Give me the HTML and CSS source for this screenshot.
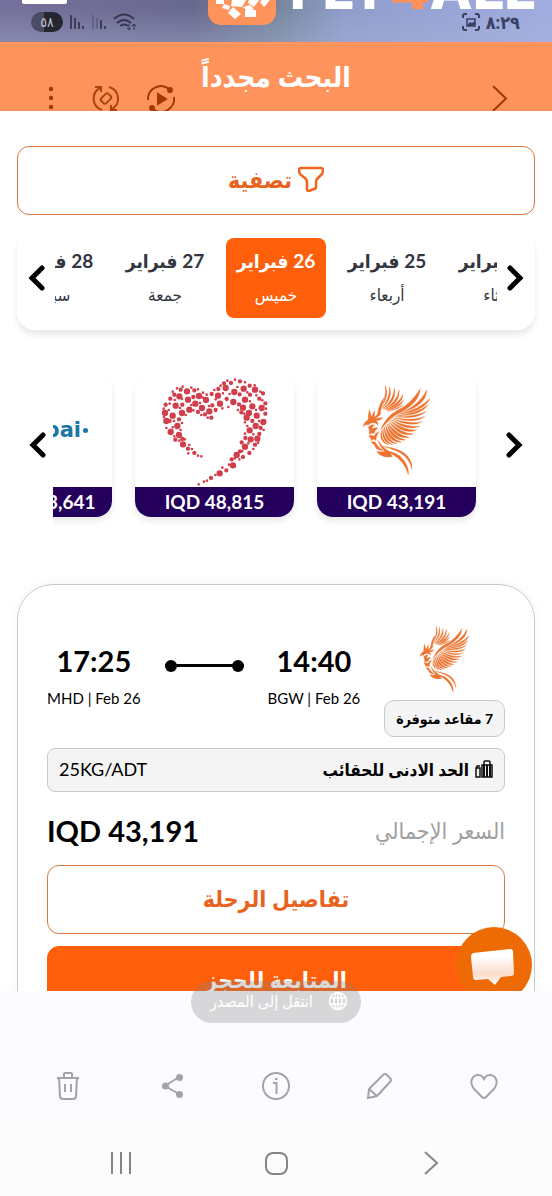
FILE: index.html
```html
<!DOCTYPE html>
<html lang="ar" dir="rtl">
<head>
    <meta charset="UTF-8">
    <meta name="viewport" content="width=device-width, initial-scale=1.0">
    <title>FLY4ALL</title>
    <link rel="stylesheet" href="styles.css">
</head>
<body>
    <svg class="defs" aria-hidden="true">
        <symbol id="phoenix" viewBox="150 80 208 278">
            <!-- back wing -->
            <path d="M205 152Q225 120 220 84Q235 118 205 152zM208 154Q234 125 233 88Q245 125 208 154zM212 155Q245 130 248 92Q256 134 212 155zM215 157Q255 135 262 98Q266 140 215 157zM220 158Q260 140 274 111Q270 146 220 158zM224 159Q258 147 276 128Q266 152 224 159zM226 162Q256 154 275 143Q260 158 226 162zM196 176Q200 140 216 122Q208 146 204 172z"/>
            <!-- front wing -->
            <path d="M206 218Q222 178 256 160Q296 142 326 94Q322 138 264 166Q234 182 206 218z"/>
            <path d="M262 168Q322 146 346 97Q344 148 262 168zM258 172Q326 156 355 124Q338 164 258 172zM254 176Q318 168 350 143Q328 176 254 176zM250 179Q316 178 344 162Q320 188 250 179zM246 182Q306 192 339 178Q310 202 246 182zM242 185Q300 203 332 193Q300 214 242 185zM238 188Q292 213 325 207Q288 226 238 188zM235 191Q282 222 315 219Q276 236 235 191zM231 194Q272 231 305 231Q264 244 231 194zM228 198Q260 238 293 241Q250 250 228 198zM225 201Q248 243 281 249Q238 255 225 201zM221 205Q238 248 269 256Q226 258 221 205zM217 209Q226 250 256 261Q216 258 217 209zM213 213Q215 250 243 264Q206 257 213 213zM209 219Q206 250 230 264Q198 254 209 219z"/>
            <!-- head and crest -->
            <path d="M153 209Q158 192 168 189Q169 172 172 157Q176 170 178 180Q184 166 189 161Q188 174 185 181Q196 170 208 168Q200 180 190 185Q202 182 213 181Q204 191 192 191Q199 194 198 204Q191 196 182 197Q172 198 168 205Q164 198 153 209z"/>
            <!-- breast and body -->
            <path d="M169 210Q178 200 188 204Q180 208 181 217Q187 211 198 213Q188 220 186 230Q178 224 172 235Q174 220 169 210zM170 238Q180 231 185 238Q190 228 202 224Q191 238 192 251Q184 243 178 252Q179 243 170 238zM178 256Q188 249 194 262Q200 274 214 281Q196 279 192 274Q190 264 178 256zM194 283Q208 287 218 283Q201 266 198 250Q210 271 232 284L242 299Q222 304 208 296Q198 291 194 283z"/>
            <!-- tail -->
            <path d="M212 268Q270 275 289 300Q302 318 301 338Q295 314 278 297Q258 280 212 268zM216 280Q258 285 274 308Q292 329 290 355Q282 328 266 311Q250 294 216 280z"/>
        </symbol>
        <symbol id="arrow" viewBox="0 0 18 26">
            <path d="M4 3l10 10L4 23" fill="none" stroke="currentColor" stroke-width="5" stroke-linecap="round"/>
        </symbol>
    </svg>

    <div class="screen">
        <div class="viewport">
            <header class="topbar">
                <span class="menu-bar"></span>
                <div class="brand" dir="ltr">
                    <svg class="brand-mark" width="68" height="68" viewBox="0 0 68 68">
                        <rect width="68" height="68" rx="13" fill="#ff935c"/>
                        <path fill="#fff" d="M8 40h8v7H8zM27 38h14l-7 12-11-1 1-6zM42 38l12 1-8 11-6-4zM54 42l8 1-6 7-4-5zM16 47l6 2-1 4-7-2zM25 50l8 7-6 5-7-6zM35 50l7-2 4 4-6 3zM37 53h11v7H37z"/>
                    </svg>
                    <span class="brand-name">FLY<b>4</b>ALL</span>
                </div>

                <div class="status" dir="ltr">
                    <div class="status-side">
                        <span class="battery">٥٨</span>
                        <svg width="16" height="18" viewBox="0 0 16 18" fill="none" stroke="#3d3d58" stroke-width="2"><path d="M2 2v14M6 5v11M10 9v7M14 13v3"/></svg>
                        <svg width="16" height="18" viewBox="0 0 16 18" fill="none" stroke="#3d3d58" stroke-width="2"><path d="M2 2v14M6 5v11" opacity=".35"/><path d="M10 7v9M14 13v3"/></svg>
                        <svg width="24" height="18" viewBox="0 0 24 18" fill="none" stroke="#35354e" stroke-width="2"><path d="M1 6q10-9 20 0M4 10q7-6 14 0M7 13q4-3 8 0"/><path d="M16 11v6m-2-2l2 2 2-2M21 17v-6m-2 2l2-2 2 2" stroke-width="1"/></svg>
                    </div>
                    <div class="status-side">
                        <svg width="18" height="18" viewBox="0 0 18 18" fill="none" stroke="#3a4162" stroke-width="2"><path d="M1 5V3q0-2 2-2h2M13 1h2q2 0 2 2v2M17 13v2q0 2-2 2h-2M5 17H3q-2 0-2-2v-2"/><path d="M5 6h8v7H5z" stroke-width="1.500"/><path d="M5 12l3-3 2 1 3-2v5H5z" fill="#3a4162" stroke="none"/></svg>
                        <span class="clock">٨:٢٩</span>
                    </div>
                </div>
            </header>

            <div class="again">
                <button class="again-button" type="button">البحث مجدداً</button>
                <div class="viewer-tools" dir="ltr">
                    <button type="button" aria-label="المزيد"><svg width="28" height="28" viewBox="0 0 28 28" fill="#a03a00"><circle cx="14" cy="4" r="2.200"/><circle cx="14" cy="13" r="2.200"/><circle cx="14" cy="22" r="2.200"/></svg></button>
                    <button type="button" aria-label="تدوير"><svg width="28" height="28" viewBox="0 0 28 28" fill="none" stroke="#a8450f" stroke-width="2"><path d="M8 3A12 12 0 0 0 10 25M3 2h6v5M17 2A12 12 0 0 1 20 24M25 25h-6v-5"/><rect x="9" y="10" width="10" height="7" rx="2" transform="rotate(-45 14 13.500)"/></svg></button>
                    <button type="button" aria-label="تشغيل"><svg width="28" height="28" viewBox="0 0 28 28" fill="none" stroke="#a03a00" stroke-width="2"><path d="M1 15A13 13 0 0 1 22 4M27 12A13 13 0 0 1 6 24"/><circle cx="23" cy="5" r="2" fill="#a03a00"/><circle cx="5" cy="23" r="2" fill="#a03a00"/><path d="M11 9v10l8-5z" fill="#a03a00"/></svg></button>
                    <button class="tool-back" type="button" aria-label="رجوع"><svg width="28" height="28" viewBox="0 0 28 28" fill="none" stroke="#a03a00" stroke-width="2"><path d="M7 1l13 12.500L7 26"/></svg></button>
                </div>
            </div>

            <main class="content">
                <button class="outline-button" type="button">
                    <svg width="26" height="26" viewBox="0 0 26 26" fill="none" stroke="#f1641e" stroke-width="2.500" stroke-linejoin="round"><path d="M3 2h20q2 0 2 2v1q0 2-2 4l-4 4q-1 1-1 4v4q0 2-2 2l-5 2q-2 0-2-2v-6q0-3-2-5L3 9Q1 7 1 5V4q0-2 2-2z"/></svg>
                    تصفية
                </button>

                <section class="dates">
                    <button class="arrow" type="button" aria-label="السابق"><svg width="18" height="26"><use href="#arrow"/></svg></button>
                    <div class="dates-window">
                        <button class="date" type="button"><b>24 فبراير</b><span>ثلاثاء</span></button>
                        <button class="date" type="button"><b>25 فبراير</b><span>أربعاء</span></button>
                        <button class="date selected" type="button"><b>26 فبراير</b><span>خميس</span></button>
                        <button class="date" type="button"><b>27 فبراير</b><span>جمعة</span></button>
                        <button class="date" type="button"><b>28 فبراير</b><span>سبت</span></button>
                    </div>
                    <button class="arrow flip" type="button" aria-label="التالي"><svg width="18" height="26"><use href="#arrow"/></svg></button>
                </section>

                <section class="airlines">
                    <button class="arrow" type="button" aria-label="السابق"><svg width="18" height="26"><use href="#arrow"/></svg></button>
                    <div class="airlines-window">
                        <a class="airline" href="#">
                            <span class="airline-logo"><svg class="phoenix" width="69" height="92"><use href="#phoenix"/></svg></span>
                            <span class="airline-price" dir="ltr">IQD 43,191</span>
                        </a>
                        <a class="airline" href="#">
                            <span class="airline-logo">
                                <svg width="158" height="114" viewBox="50 40 474 342" fill="none" stroke="#d23f4c" stroke-linecap="round">
                                    <path stroke-width="19" d="M203 95h0M319 85h0M373 87h0M407 90h0M180 110h0M239 109h0M296 108h0M345 97h0M206 120h0M260 121h0M228 132h0M302 132h0M342 127h0M377 120h0M169 138h0M248 145h0M210 150h0M270 155h0M371 144h0M399 140h0M427 145h0M137 160h0M160 168h0M188 160h0M389 160h0M412 168h0M141 184h0M382 174h0M432 187h0M174 199h0M409 199h0M154 217h0M391 212h0M179 226h0M394 239h0M191 254h0M377 261h0M414 237h0M352 286h0M341 317h0M301 341h0"/>
                                    <path stroke-width="13" d="M225 92h0M335 70h0M362 65h0M391 78h0M153 117h0M139 135h0M165 105h0M184 90h0M277 103h0M297 88h0M314 71h0M361 104h0M392 105h0M420 117h0M431 101h0M438 131h0M189 135h0M222 112h0M279 137h0M322 118h0M359 134h0M438 162h0M179 179h0M151 184h0M257 164h0M289 151h0M276 174h0M236 157h0M366 158h0M399 184h0M424 205h0M168 240h0M420 223h0M378 235h0M407 255h0M206 267h0M225 280h0M390 280h0M367 248h0M371 292h0M337 299h0M321 332h0M275 355h0M189 238h0M362 275h0"/>
                                    <path stroke-width="8" d="M160 96h0M173 86h0M190 81h0M216 84h0M236 89h0M251 99h0M262 105h0M285 91h0M304 78h0M324 63h0M347 60h0M377 68h0M406 77h0M423 96h0M429 122h0M440 147h0M133 147h0M151 132h0M166 121h0M188 118h0M216 136h0M242 130h0M251 114h0M269 139h0M289 119h0M311 101h0M331 103h0M354 82h0M384 98h0M411 107h0M392 125h0M410 151h0M375 162h0M356 151h0M327 142h0M309 146h0M265 174h0M246 166h0M222 152h0M199 166h0M182 145h0M148 151h0M134 172h0M164 184h0M188 190h0M160 203h0M184 211h0M141 205h0M165 230h0M180 243h0M197 239h0M210 256h0M207 281h0M218 268h0M236 288h0M246 290h0M377 188h0M384 199h0M419 184h0M433 211h0M402 224h0M377 222h0M416 250h0M387 251h0M402 268h0M369 274h0M360 299h0M329 315h0M346 296h0M309 324h0M288 346h0M263 363h0M254 366h0M238 374h0"/>
                                </svg>
                            </span>
                            <span class="airline-price" dir="ltr">IQD 48,815</span>
                        </a>
                        <a class="airline" href="#">
                            <span class="airline-logo flydubai" dir="ltr">flydubai<i></i></span>
                            <span class="airline-price" dir="ltr">IQD 1,063,641</span>
                        </a>
                    </div>
                    <button class="arrow flip" type="button" aria-label="التالي"><svg width="18" height="26"><use href="#arrow"/></svg></button>
                </section>

                <article class="flight">
                    <div class="route">
                        <div class="carrier">
                            <svg class="phoenix" width="51" height="68"><use href="#phoenix"/></svg>
                            <span class="seats">7 مقاعد متوفرة</span>
                        </div>
                        <div class="stop" dir="ltr"><b>14:40</b><span>BGW | Feb 26</span></div>
                        <span class="leg"></span>
                        <div class="stop" dir="ltr"><b>17:25</b><span>MHD | Feb 26</span></div>
                    </div>

                    <div class="baggage">
                        <svg width="18" height="18" viewBox="0 0 18 18" fill="none" stroke="#111"><path d="M1 8h4v9H1zM2 8V6h3" stroke-width="1.500"/><path d="M7 5h10v12H7zM9 5V2q0-1 1-1h4q1 0 1 1v3" stroke-width="1.500"/><path d="M9 5v12M12 5v12M15 5v12" stroke-width="2"/></svg>
                        <b>الحد الادنى للحقائب</b>
                        <span dir="ltr">25KG/ADT</span>
                    </div>

                    <div class="total">
                        <span>السعر الإجمالي</span>
                        <b dir="ltr">IQD 43,191</b>
                    </div>

                    <button class="outline-button" type="button">تفاصيل الرحلة</button>
                    <button class="solid-button" type="button">المتابعة للحجز</button>
                </article>
            </main>

            <button class="chat" type="button" aria-label="محادثة">
                <svg width="76" height="76" viewBox="0 0 76 76">
                    <defs>
                        <linearGradient id="bubble" x1="0" y1="0" x2="0" y2="1">
                            <stop offset=".2" stop-color="#fff"/>
                            <stop offset=".7" stop-color="#fbdccb"/>
                            <stop offset="1" stop-color="#fff"/>
                        </linearGradient>
                    </defs>
                    <path fill="url(#bubble)" d="M17 26l37-4q3 0 3 3l1 21q0 3-3 3l-10 1-6 8-7-6-12 1q-3 0-3-3l-2-20q0-3 2-4z"/>
                </svg>
            </button>
        </div>

        <a class="source" href="#">
            <svg width="20" height="20" viewBox="0 0 20 20" fill="none" stroke="#fff" stroke-width="1.500"><circle cx="10" cy="10" r="8.500"/><ellipse cx="10" cy="10" rx="4" ry="8.500"/><path d="M10 1v18M2 7h16M2 13h16"/></svg>
            انتقل إلى المصدر
        </a>

        <footer class="gallery" dir="ltr">
            <div class="actions">
                <button type="button" aria-label="حذف"><svg width="30" height="30" viewBox="0 0 30 30"><path d="M4 7h22M11 7V3q0-1 1-1h6q1 0 1 1v4M6 7l1 18q0 3 3 3h10q3 0 3-3l1-18M12 13v8M18 13v8"/></svg></button>
                <button type="button" aria-label="مشاركة"><svg width="30" height="30" viewBox="0 0 30 30"><path d="M22 6L8 15l14 8"/><g fill="#a4a4a8" stroke="none"><circle cx="22.500" cy="6.500" r="3.500"/><circle cx="8.500" cy="15" r="3.500"/><circle cx="22.500" cy="23.500" r="3.500"/></g></svg></button>
                <button type="button" aria-label="معلومات"><svg width="30" height="30" viewBox="0 0 30 30"><circle cx="15" cy="15" r="13"/><path d="M12 12h3.500v11M14 8h2.500"/></svg></button>
                <button type="button" aria-label="تعديل"><svg width="30" height="30" viewBox="0 0 30 30"><path d="M4 18L18 4q2-2 4 0l3 3q2 2 0 4L12 25l-9 2zM4 18l8 7"/></svg></button>
                <button type="button" aria-label="مفضلة"><svg width="30" height="30" viewBox="0 0 30 30"><path d="M15 27q-1 0-2-1L5 18Q1 13 3 8q2-4 6-4 4 0 6 4 2-4 6-4 4 0 6 4 2 5-2 10l-8 8q-1 1-2 1z"/></svg></button>
            </div>
            <nav class="system-nav">
                <button type="button" aria-label="التطبيقات"><svg width="26" height="26" viewBox="0 0 26 26"><path d="M4 2v22M13 2v22M22 2v22"/></svg></button>
                <button type="button" aria-label="الرئيسية"><svg width="26" height="26" viewBox="0 0 26 26"><rect x="3" y="3" width="21" height="21" rx="7"/></svg></button>
                <button type="button" aria-label="رجوع"><svg width="26" height="26" viewBox="0 0 26 26"><path d="M7 2l12 11L7 24"/></svg></button>
            </nav>
        </footer>
    </div>
</body>
</html>
```
FILE: styles.css
```css
:root {
    --orange: #ff5e0a;
    --orange-text: #e8641e;
    --orange-line: #d8793f;
    --navy: #24005c;
    --grey-line: #c9c9c9;
    --grey-fill: #f4f4f4;
}

* {
    box-sizing: border-box;
}

body {
    margin: 0;
    background-color: #fff;
    color: #000;
    font-family: Lato, "DejaVu Sans Condensed", "DejaVu Sans", sans-serif;
}

button {
    margin: 0;
    padding: 0;
    border: none;
    background: none;
    color: inherit;
    font: inherit;
    cursor: pointer;
}

a {
    color: inherit;
    text-decoration: none;
}

svg {
    display: block;
    flex: none;
}

.defs {
    position: absolute;
    width: 0;
    height: 0;
}

.phoenix {
    fill: #ec7430;
    stroke: #ec7430;
    stroke-width: 1px;
}

.screen {
    position: relative;
    display: flex;
    flex-direction: column;
    height: 100vh;
}

.viewport {
    position: relative;
    flex: 1;
    min-height: 0;
    overflow: hidden;
}

/* header */
.topbar {
    position: relative;
    display: flex;
    justify-content: flex-start;
    height: 42px;
    overflow: hidden;
    background: linear-gradient(180deg, transparent 20%, rgba(170, 185, 215, 0.35)), linear-gradient(90deg, #76709c 0%, #69698f 35%, #7888a0 51%, #8f9ccb 62%, #a1ace0 100%);
}

.menu-bar {
    position: absolute;
    top: 0;
    left: 22px;
    width: 45px;
    height: 4px;
    border-radius: 0 0 2px 2px;
    background-color: #fff;
}

.brand {
    display: flex;
    align-items: flex-end;
    gap: 14px;
    height: 25px;
    padding-right: 16px;
}

.brand-name {
    padding-bottom: 15px;
    color: #fff;
    font-family: Inter, sans-serif;
    font-size: 56px;
    font-weight: 800;
    line-height: 42px;
}

.brand-name b {
    color: #ff9159;
}

.status {
    position: absolute;
    top: 12px;
    right: 32px;
    left: 31px;
    display: flex;
    justify-content: space-between;
    color: #3a4162;
}

.status-side {
    display: flex;
    align-items: center;
    gap: 6px;
    height: 20px;
}

.battery {
    width: 32px;
    border-radius: 10px;
    background: linear-gradient(90deg, #4b4b63 40%, #26262f 40%);
    color: #c4c4d4;
    font-size: 14px;
    line-height: 20px;
    text-align: center;
}

.clock {
    font-size: 18px;
    font-weight: 700;
}

.again {
    position: relative;
    height: 69px;
    overflow: hidden;
    background-color: #ff935c;
}

.again-button {
    width: 100%;
    height: 68px;
    color: #fff;
    font-size: 28px;
    font-weight: 700;
}

.viewer-tools {
    position: absolute;
    top: 43px;
    right: 38px;
    left: 37px;
    display: flex;
    gap: 27px;
}

.tool-back {
    margin-left: auto;
}

.content {
    padding: 35px 17px 0;
}

.outline-button,
.solid-button {
    display: flex;
    align-items: center;
    justify-content: center;
    gap: 6px;
    width: 100%;
    height: 69px;
    padding-bottom: 3px;
    border: 1px solid var(--orange-line);
    border-radius: 12px;
    color: var(--orange-text);
    font-size: 23px;
    font-weight: 700;
}

.solid-button {
    border-color: var(--orange);
    background-color: var(--orange);
    color: #fff;
}

.arrow {
    flex: none;
}

.flip {
    transform: scaleX(-1);
}

/* date strip */
.dates {
    display: flex;
    align-items: center;
    gap: 9px;
    margin-top: 16px;
    padding: 7px 11px 12px;
    border-radius: 18px;
    box-shadow: 0 5px 6px rgba(0, 0, 0, 0.09);
}

.dates-window {
    display: flex;
    flex: 1;
    justify-content: center;
    gap: 11px;
    min-width: 0;
    overflow: hidden;
}

.date {
    display: flex;
    flex: none;
    flex-direction: column;
    align-items: center;
    justify-content: center;
    gap: 10px;
    width: 100px;
    height: 80px;
    border-radius: 8px;
    color: #333640;
    font-size: 17px;
    line-height: 24px;
    white-space: nowrap;
}

.date b {
    font-size: 19px;
}

.date.selected {
    background-color: var(--orange);
    color: #fff;
}

/* airline prices */
.airlines {
    display: flex;
    align-items: center;
    gap: 6px;
    margin-top: 43px;
    padding: 0 12px;
}

.airlines-window {
    display: flex;
    flex: 1;
    gap: 23px;
    min-width: 0;
    padding-right: 23px;
    overflow-x: clip;
}

.airline {
    flex: none;
    width: 159px;
    border-radius: 16px;
    box-shadow: 0 4px 6px rgba(0, 0, 0, 0.09);
    overflow: hidden;
}

.airline-logo {
    display: flex;
    align-items: center;
    justify-content: center;
    height: 114px;
}

.airline-price {
    display: block;
    background-color: var(--navy);
    color: #fff;
    font-size: 19px;
    font-weight: 700;
    line-height: 30px;
    text-align: center;
}

.flydubai {
    justify-content: flex-end;
    gap: 2px;
    padding-right: 24px;
    color: #1b76a6;
    font-family: "DejaVu Sans", sans-serif;
    font-size: 21px;
    font-weight: 700;
}

.flydubai i {
    width: 5px;
    height: 5px;
    border-radius: 50%;
    background-color: #1b76a6;
}

/* flight card */
.flight {
    display: flex;
    flex-direction: column;
    margin-top: 67px;
    padding: 40px 29px;
    border: 1px solid var(--grey-line);
    border-radius: 36px;
    box-shadow: 0 0 16px rgba(0, 0, 0, 0.04);
}

.route {
    display: flex;
    justify-content: space-between;
}

.carrier {
    display: flex;
    flex-direction: column;
    align-items: center;
    gap: 7px;
}

.seats {
    padding: 0 11px;
    border: 1px solid var(--grey-line);
    border-radius: 10px;
    background-color: var(--grey-fill);
    font-size: 14px;
    font-weight: 700;
    line-height: 35px;
}

.stop {
    display: flex;
    flex-direction: column;
    align-items: center;
    gap: 9px;
    padding-top: 18px;
    font-size: 15px;
}

.stop b {
    font-size: 29px;
    line-height: 36px;
}

.stop span {
    line-height: 20px;
}

.leg {
    display: flex;
    align-items: center;
    justify-content: space-between;
    width: 79px;
    height: 3px;
    margin-top: 39px;
    background-color: #000;
}

.leg::before,
.leg::after {
    content: "";
    width: 12px;
    height: 12px;
    border-radius: 50%;
    background-color: #000;
}

.baggage {
    display: flex;
    align-items: center;
    gap: 6px;
    height: 44px;
    margin-top: 11px;
    padding: 0 11px 2px;
    border: 1px solid var(--grey-line);
    border-radius: 8px;
    background-color: var(--grey-fill);
    font-size: 17px;
}

.baggage span {
    margin-right: auto;
    font-size: 18px;
}

.total {
    display: flex;
    align-items: center;
    justify-content: space-between;
    height: 73px;
    padding-top: 3px;
    color: #a0a0a0;
    font-size: 23px;
}

.total b {
    color: #000;
    font-size: 29px;
}

.solid-button {
    margin-top: 12px;
}

.chat {
    position: absolute;
    right: 20px;
    bottom: -12px;
    width: 76px;
    height: 76px;
    border-radius: 50%;
    background-color: #ee6a05;
}

/* gallery controls */
.source {
    position: absolute;
    bottom: 173px;
    left: 50%;
    display: flex;
    align-items: center;
    justify-content: space-between;
    width: 170px;
    height: 42px;
    padding: 0 13px 2px 19px;
    border-radius: 21px;
    background-color: rgba(130, 130, 130, 0.3);
    color: #fff;
    font-size: 16px;
    white-space: nowrap;
    transform: translateX(-50%);
}

.gallery {
    flex: none;
    height: 205px;
    padding-top: 60px;
    background: linear-gradient(#fcfcff 134px, #fcfcfc 134px);
    fill: none;
    stroke-width: 2;
}

.actions,
.system-nav {
    display: flex;
    justify-content: space-between;
    padding: 20px 53px;
    stroke: #a4a4a8;
}

.system-nav {
    padding: 29px 108px;
    stroke: #858585;
}
```
